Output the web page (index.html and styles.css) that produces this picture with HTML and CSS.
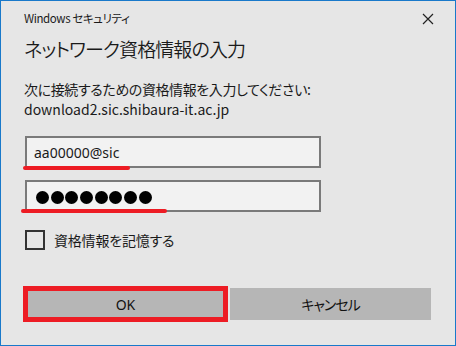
FILE: index.html
```html
<!DOCTYPE html>
<html lang="ja">
<head>
<meta charset="utf-8">
<title>Windows セキュリティ</title>
<link rel="stylesheet" href="styles.css">
</head>
<body>
<div class="dialog">
  <div class="titlebar">
    <span class="app">Windows セキュリティ</span>
    <svg class="close" width="12" height="12" viewBox="0 0 12 12"><path d="M1 1L11 11M11 1L1 11" stroke="#222" stroke-width="1.2" fill="none"/></svg>
  </div>
  <h1 class="heading">ネットワーク資格情報の入力</h1>
  <div class="desc">
    <div class="line jp">次に接続するための資格情報を入力してください:</div>
    <div class="line">download2.sic.shibaura-it.ac.jp</div>
  </div>
  <div class="fields">
    <div class="field">
      <span class="value">aa00000@sic</span>
      <span class="mark mark-user"></span>
    </div>
    <div class="field">
      <span class="dots"><i></i><i></i><i></i><i></i><i></i><i></i><i></i><i></i></span>
      <span class="mark mark-pass"></span>
    </div>
  </div>
  <label class="remember"><span class="box"></span><span class="jp">資格情報を記憶する</span></label>
  <div class="buttons">
    <div class="btn btn-ok">OK</div>
    <div class="btn jp-btn">キャンセル</div>
  </div>
</div>
</body>
</html>
```
FILE: styles.css
```css
html, body {
  margin: 0;
  padding: 0;
  background: #e6e6e6;
}
.dialog {
  box-sizing: border-box;
  width: 456px;
  height: 346px;
  border: 1px solid #1979ca;
  background: #e6e6e6;
  padding: 0 24px 0 23px;
  font-family: "Noto Sans CJK JP", "Noto Sans", sans-serif;
  font-feature-settings: "palt";
  color: #1a1a1a;
  display: flex;
  flex-direction: column;
}
.titlebar {
  height: 33px;
  display: flex;
  align-items: center;
  justify-content: space-between;
  margin-right: -8px;
}
.app {
  font-size: 11.5px;
  margin-top: 1px;
  letter-spacing: -0.4px;
}
.close { margin-right: 5px; margin-top: 2px; }
.heading {
  margin: 0;
  font-weight: 350;
  font-size: 19px;
  line-height: 28px;
  height: 28px;
  margin-top: 1px;
  letter-spacing: -0.9px;
}
.desc {
  margin-top: 16px;
  font-size: 14px;
  line-height: 20px;
}
.line { height: 20px; }
.desc .jp { letter-spacing: -0.4px; }
.fields {
  margin-top: 17px;
  margin-left: 1px;
  display: flex;
  flex-direction: column;
  gap: 12px;
  width: 296px;
}
.field {
  position: relative;
  box-sizing: border-box;
  height: 32px;
  border: 2px solid #7a7a7a;
  background: #f2f2f2;
  display: flex;
  align-items: center;
  padding-left: 7px;
  font-family: "Noto Sans", sans-serif;
  font-size: 14px;
}
.value { margin-top: 1px; }
.dots {
  display: flex;
  gap: 1.7px;
  margin-left: 2px;
  margin-top: 2px;
}
.dots i {
  display: block;
  width: 13px;
  height: 13px;
  border-radius: 50%;
  background: #000;
}
.mark {
  position: absolute;
  height: 4px;
  border-radius: 2px;
  background: #ed1c24;
}
.mark-user { left: -4px; width: 107px; top: 28px; }
.mark-pass { left: -6px; width: 146px; top: 27px; }
.remember {
  margin-top: 18px;
  margin-left: 1px;
  display: flex;
  align-items: center;
  gap: 9px;
  font-size: 14px;
}
.remember .jp { letter-spacing: -0.2px; }
.box {
  box-sizing: border-box;
  width: 20px;
  height: 20px;
  border: 2px solid #333;
}
.buttons {
  margin-top: 38px;
  margin-left: 1px;
  display: flex;
  gap: 4px;
}
.btn {
  box-sizing: border-box;
  width: 201px;
  height: 32px;
  background: #b6b6b6;
  display: flex;
  align-items: center;
  justify-content: center;
  font-size: 14px;
  color: #111;
}
.jp-btn { letter-spacing: -1px; }
.btn-ok {
  outline: 5px solid #ed1c24;
  outline-offset: -3px;
  font-family: "Noto Sans", sans-serif;
}
```
